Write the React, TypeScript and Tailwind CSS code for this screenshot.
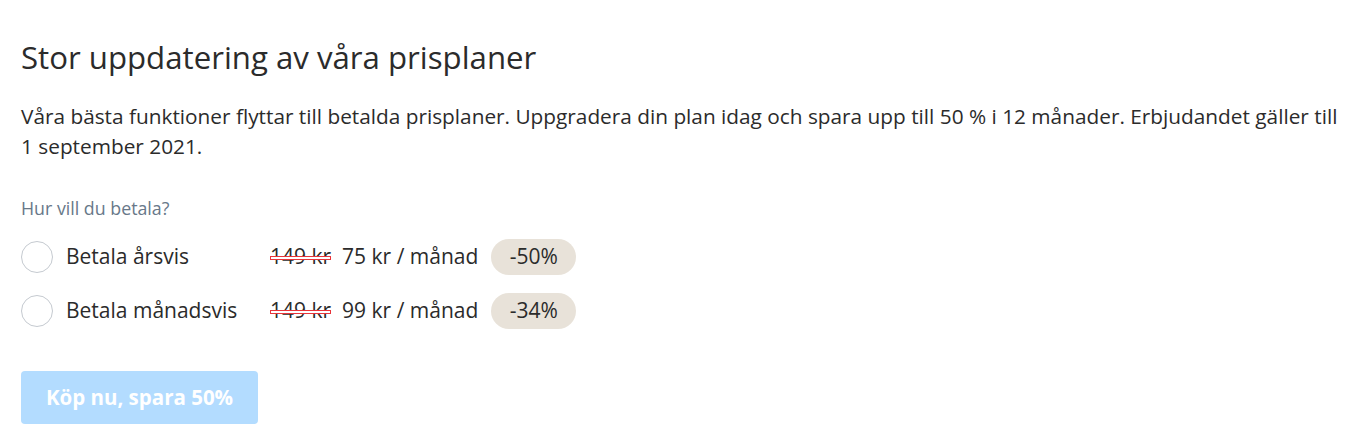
import { useState } from "react";

const plans = [
  { id: "year", label: "Betala årsvis", price: "75 kr / månad", badge: "-50%" },
  { id: "month", label: "Betala månadsvis", price: "99 kr / månad", badge: "-34%" },
];

function OldPrice() {
  return (
    <span className="relative inline-block">
      149 kr
      <span className="absolute left-0 right-0 top-[54%] h-[4px] -translate-y-1/2 border border-[#e8343a] bg-white" />
    </span>
  );
}

export default function App() {
  const [plan, setPlan] = useState("");

  return (
    <main className="min-h-screen bg-white px-[21px] pt-[37px] text-[#2b2b2b]" style={{ fontFamily: '"Open Sans", sans-serif' }}>
      <h1 className="text-[31.2px] leading-[40px]">Stor uppdatering av våra prisplaner</h1>
      <p className="mt-[24px] text-[20.8px] leading-[30px]">
        Våra bästa funktioner flyttar till betalda prisplaner. Uppgradera din plan idag och spara upp till 50 % i 12 månader. Erbjudandet gäller till 1 september 2021.
      </p>

      <p className="mt-[35px] text-[17.8px] leading-[24px] text-[#687889]">Hur vill du betala?</p>

      <div className="mt-[19px] flex flex-col gap-[18px]">
        {plans.map((p) => (
          <label key={p.id} className="flex h-[36px] cursor-pointer items-center text-[21px]">
            <input type="radio" name="plan" checked={plan === p.id} onChange={() => setPlan(p.id)} className="sr-only" />
            <span className="h-[32px] w-[32px] shrink-0 rounded-full border border-[#c5cad0] bg-white" />
            <span className="ml-[13px] w-[204px] shrink-0">{p.label}</span>
            <OldPrice />
            <span className="ml-[11px]">{p.price}</span>
            <span className="ml-[13px] flex h-[36px] w-[85px] items-center justify-center rounded-full bg-[#e8e2d9]">{p.badge}</span>
          </label>
        ))}
      </div>

      <button className="mt-[42px] flex h-[53px] w-[237px] items-center justify-center rounded-[4px] bg-[#b3dcff] text-[20.5px] font-bold text-white">
        Köp nu, spara 50%
      </button>
    </main>
  );
}
